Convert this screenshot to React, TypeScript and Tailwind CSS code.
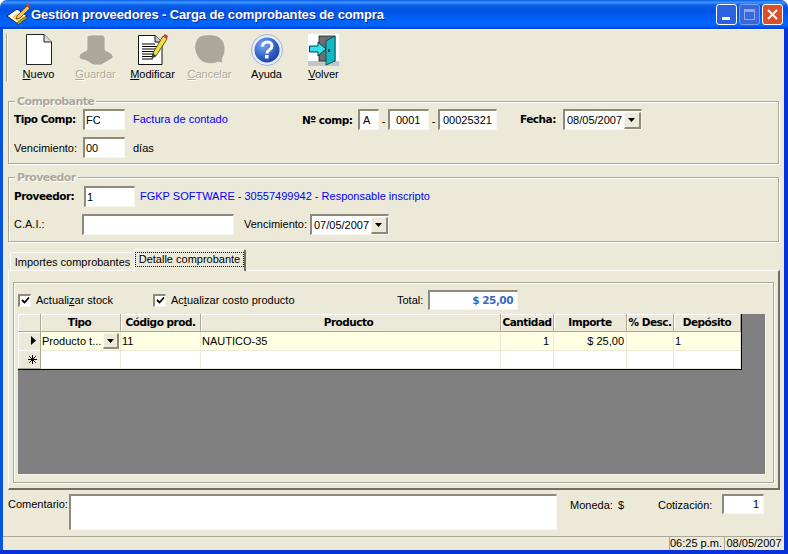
import type { ReactNode } from "react";

const sunken = "bg-white border-t-2 border-l-2 border-t-[#8d8a7c] border-l-[#8d8a7c] border-r border-b border-r-[#f7f6ee] border-b-[#f7f6ee]";
const etched = "border border-[#aca899] shadow-[inset_1px_1px_0_#fff,1px_1px_0_#fff]";
const bold = "font-['DejaVu_Sans'] font-bold text-[10.500px] tracking-[-0.500px]";

function Input({ className, children }: { className: string; children?: ReactNode }) {
  return <div className={`${sunken} h-[21px] flex items-center px-px leading-none shrink-0 ${className}`}>{children}</div>;
}

function ArrowButton({ className }: { className: string }) {
  return (
    <div className={`bg-[#ece9d8] flex items-center justify-center border-t border-l border-t-[#f7f6ee] border-l-[#f7f6ee] border-r-2 border-b-2 border-r-[#8d8a7c] border-b-[#8d8a7c] shrink-0 ${className}`}>
      <svg width="8" height="4" viewBox="0 0 8 4"><path d="M0 0h7L3.500 4z" fill="#000" /></svg>
    </div>
  );
}

function DateCombo({ value }: { value: string }) {
  return (
    <div className={`${sunken} w-[79px] h-[21px] flex items-center shrink-0`}>
      <span className="flex-1 pl-[2px] pt-px whitespace-nowrap">{value}</span>
      <ArrowButton className="w-[17px] h-[17px]" />
    </div>
  );
}

function Group({ title, className, children }: { title: string; className: string; children: ReactNode }) {
  return (
    <div className={`relative ${etched} mx-[5px] ${className}`}>
      <div className="absolute -top-[7px] left-[6px] bg-[#ece9d8] px-[2px] font-['DejaVu_Sans'] font-bold text-[11px] tracking-[-0.600px] leading-[14px] text-[#aca899] [text-shadow:1px_1px_0_#fff]">
        {title}
      </div>
      {children}
    </div>
  );
}

function Check({ className, children }: { className: string; children: ReactNode }) {
  return (
    <div className={`flex items-center gap-[5px] shrink-0 ${className}`}>
      <div className={`${sunken} w-[13px] h-[13px] bg-[#f5f3e8] flex items-center justify-center`}>
        <svg width="9" height="9" viewBox="0 0 9 9"><path d="M1 4l2.500 2.500L8 1.500" fill="none" stroke="#000" strokeWidth="1.800" /></svg>
      </div>
      <span>{children}</span>
    </div>
  );
}

function ToolButton({ icon, label, disabled }: { icon: ReactNode; label: ReactNode; disabled?: boolean }) {
  return (
    <div className="w-[57px] flex flex-col items-center shrink-0">
      <div className="h-[33px] flex items-center justify-center">{icon}</div>
      <div className={`mt-px leading-[14px] ${disabled ? "text-[#aca899] [text-shadow:1px_1px_0_#fff]" : "text-black"}`}>{label}</div>
    </div>
  );
}

function NewIcon() {
  return (
    <svg width="28" height="33" viewBox="0 0 28 33">
      <path d="M1.500 1.500H19L26.500 9v22.500H1.500z" fill="#fff" stroke="#222" />
      <path d="M19 1.500V9h7.500" fill="#ddd" stroke="#222" />
    </svg>
  );
}

function SaveIcon() {
  return (
    <svg width="34" height="32" viewBox="0 0 34 32">
      <path d="M8 2l5-1 11 0 2 2v13l6 3 2 3v2l-5 3-7 4H14l-6-4-7-2-1-3 2-3 6-3z" fill="#aca899" stroke="#fff" strokeWidth="0.600" />
    </svg>
  );
}

function EditIcon() {
  return (
    <svg width="32" height="33" viewBox="0 0 32 33">
      <path d="M1.500 2.500H18L25 9v22.500H1.500z" fill="#fff" stroke="#111" />
      <path d="M18 2.500V9h7" fill="#ccc" stroke="#111" />
      <path d="M5 11h13M5 13.500h15M5 16h15M5 18.500h15M5 21h15M5 23.500h13M5 26h11" stroke="#000" />
      <path d="M26 3l4 3-11 17-4 2 1-5z" fill="#f2e03a" stroke="#333" strokeWidth="0.800" />
      <path d="M26.500 2.500l1.500-1.500 3 2-1 3z" fill="#d83a2a" />
      <path d="M15 25l1-5 3 3z" fill="#333" />
    </svg>
  );
}

function CancelIcon() {
  return (
    <svg width="32" height="32" viewBox="0 0 32 32">
      <path d="M5 3C9 0 21 0 25 3c4 3 6 7 6 12 0 5-2 8-3 10l1 4-5-1c-3 2-11 2-15 0-4-2-7-7-8-12C0 11 2 6 5 3z" fill="#aca899" stroke="#fff" strokeWidth="0.500" />
    </svg>
  );
}

function HelpIcon() {
  return (
    <svg width="32" height="32" viewBox="0 0 32 32">
      <defs>
        <radialGradient id="ayuda" cx="0.350" cy="0.300" r="0.800">
          <stop offset="0" stopColor="#7fa8ee" />
          <stop offset="0.600" stopColor="#2f62c8" />
          <stop offset="1" stopColor="#16389a" />
        </radialGradient>
      </defs>
      <circle cx="16" cy="16" r="15.500" fill="#e8eef9" stroke="#9fb2d8" />
      <circle cx="16" cy="16" r="12.500" fill="url(#ayuda)" />
      <path d="M11.500 12.500c0-6 9.500-6 9.500-.5 0 4-5 3.500-5 7.500" fill="none" stroke="#fff" strokeWidth="3" />
      <rect x="14" y="21" width="3.500" height="3.500" fill="#fff" />
    </svg>
  );
}

function BackIcon() {
  return (
    <svg width="31" height="32" viewBox="0 0 31 32">
      <rect width="31" height="32" fill="#fff" />
      <path d="M0 27h31v5H0z" fill="#c4c4c4" />
      <rect x="11" y="2" width="16" height="25" fill="#6e6e6e" stroke="#222" strokeWidth="0.800" />
      <path d="M18 7l9-5v25l-9 4z" fill="#12b9c4" stroke="#063c44" strokeWidth="0.800" />
      <rect x="20" y="15" width="2" height="3" fill="#063c44" />
      <path d="M1.500 12H10V8l8 7-8 7v-4H1.500z" fill="#35e0ea" stroke="#063c44" />
    </svg>
  );
}

function TitleIcon() {
  return (
    <svg width="24" height="23" viewBox="0 0 24 23">
      <path d="M1 13l10-7 10 7-9 8z" fill="#fff" stroke="#222" />
      <path d="M6 14l6-4 6 4-6 5z" fill="#e8d85a" />
      <path d="M11 20l9-7 1 2-9 7z" fill="#b9a52a" stroke="#222" strokeWidth="0.600" />
      <path d="M11 13L21 3l3 2-10 10-4 1z" fill="#f6c65a" stroke="#6b3b12" strokeWidth="0.800" />
      <path d="M20 2l2-2 2 2-1 3z" fill="#d2452c" />
    </svg>
  );
}

const columns = "grid grid-cols-[23px_80px_80px_300px_53px_73px_47px_67px]";
const head = "bg-[#ece9d8] flex items-center justify-center whitespace-nowrap border-r border-b border-[#aca899] shadow-[inset_1px_1px_0_#fff]";
const cell = "flex items-center px-px pt-px whitespace-nowrap border-r border-b border-[#ece9d8]";

export default function App() {
  return (
    <div className="w-[788px] h-[554px] flex flex-col overflow-hidden bg-[#ece9d8] font-['Liberation_Sans',sans-serif] text-[11px] text-black rounded-t-[7px]">
      {/* Title bar */}
      <div className="h-[29px] shrink-0 flex items-center pl-[6px] pr-[5px] bg-[linear-gradient(180deg,#0a5fe8_0%,#3d95ff_8%,#0a5fe8_18%,#0053e4_35%,#0062f8_70%,#0066ff_88%,#0048d8_96%,#003dd7_100%)]">
        <TitleIcon />
        <span className="ml-[1px] font-bold text-[13px] tracking-[-0.130px] text-white whitespace-nowrap [text-shadow:1px_1px_0_#0f2a90]">
          Gestión proveedores - Carga de comprobantes de compra
        </span>
        <div className="ml-auto flex gap-[2px]">
          <div className="w-[21px] h-[21px] rounded-[3px] border border-white bg-[#2a62e0] flex items-end pl-[5px] pb-[4px]">
            <div className="w-[8px] h-[3px] bg-white" />
          </div>
          <div className="w-[21px] h-[21px] rounded-[3px] border border-[#7b9cee] bg-[#3a68d8] flex items-center justify-center">
            <div className="w-[11px] h-[11px] border border-[#8fa8ec] border-t-[3px]" />
          </div>
          <div className="w-[21px] h-[21px] rounded-[3px] border border-white bg-[#d9512c] flex items-center justify-center">
            <svg width="11" height="11" viewBox="0 0 11 11"><path d="M1 1l9 9M10 1l-9 9" stroke="#fff" strokeWidth="2" /></svg>
          </div>
        </div>
      </div>

      <div className="flex-1 flex min-h-0">
        <div className="w-[3px] bg-[#0855dd] shrink-0" />
        <div className="flex-1 flex flex-col min-w-0">
          {/* Toolbar */}
          <div className="h-[72px] shrink-0 flex border-t border-t-[#f7f6ee] pt-[3px]">
            <div className="ml-[3px] w-[2px] h-[48px] bg-[#aca899] border-r border-white shrink-0" />
            <div className="ml-[2px] flex">
              <ToolButton icon={<NewIcon />} label={<><span className="underline">N</span>uevo</>} />
              <ToolButton disabled icon={<SaveIcon />} label={<><span className="underline">G</span>uardar</>} />
              <ToolButton icon={<EditIcon />} label={<><span className="underline">M</span>odificar</>} />
              <ToolButton disabled icon={<CancelIcon />} label={<><span className="underline">C</span>ancelar</>} />
              <ToolButton icon={<HelpIcon />} label="Ayuda" />
              <ToolButton icon={<BackIcon />} label={<><span className="underline">V</span>olver</>} />
            </div>
          </div>

          {/* Comprobante */}
          <Group title="Comprobante" className="h-[63px] shrink-0 pt-[7px] pl-[5px]">
            <div className="flex items-center">
              <div className={`${bold} w-[69px]`}>Tipo Comp:</div>
              <Input className="w-[42px]">FC</Input>
              <div className="ml-[8px] w-[169px] text-[#0000ff]">Factura de contado</div>
              <div className={`${bold} w-[56px] pt-[2px]`}>Nº comp:</div>
              <Input className="w-[21px] pl-[3px]">A</Input>
              <div className="w-[9px] text-center pt-[3px]">-</div>
              <Input className="w-[41px] pl-[6px]">0001</Input>
              <div className="w-[9px] text-center pt-[3px]">-</div>
              <Input className="w-[59px] pl-[3px]">00025321</Input>
              <div className={`${bold} ml-[23px] w-[43px]`}>Fecha:</div>
              <DateCombo value="08/05/2007" />
            </div>
            <div className="flex items-center mt-[7px]">
              <div className="w-[69px] pt-px">Vencimiento:</div>
              <Input className="w-[42px]">00</Input>
              <div className="ml-[8px] pt-px">días</div>
            </div>
          </Group>

          {/* Proveedor */}
          <Group title="Proveedor" className="h-[65px] shrink-0 mt-[13px] pt-[8px] pl-[5px]">
            <div className="flex items-center">
              <div className={`${bold} w-[70px]`}>Proveedor:</div>
              <Input className="w-[51px]">1</Input>
              <div className="ml-[5px] text-[#0000ff] whitespace-nowrap">FGKP SOFTWARE - 30557499942 - Responsable inscripto</div>
            </div>
            <div className="flex items-center mt-[7px]">
              <div className="w-[68px]">C.A.I.:</div>
              <Input className="w-[152px]" />
              <div className="ml-[10px] w-[66px]">Vencimiento:</div>
              <DateCombo value="07/05/2007" />
            </div>
          </Group>

          {/* Tabs */}
          <div className="h-[21px] shrink-0 mt-[7px] ml-[7px] flex items-end relative z-10">
            <div className="w-[124px] h-[19px] mb-[-1px] flex items-center justify-center border-t border-l border-white rounded-t-[2px]">Importes comprobantes</div>
            <div className="w-[112px] h-[22px] mb-[-1px] flex items-start pt-[3px] justify-center border-t border-l border-white border-r-2 border-r-[#716f64] rounded-t-[2px] bg-[#ece9d8]">
              <span className="outline-1 outline-dotted outline-black px-[3px] leading-[13px]">Detalle comprobante</span>
            </div>
          </div>

          {/* Panel */}
          <div className="h-[220px] shrink-0 ml-[5px] mr-[4px] border-t border-l border-white border-r-2 border-b-2 border-r-[#716f64] border-b-[#716f64] pt-[11px] px-[4px]">
            <div className={`${etched} h-[201px] relative pt-[7px] px-[4px]`}>
              <div className="flex items-center h-[20px]">
                <Check className="w-[135px]">Actuali<span className="underline">z</span>ar stock</Check>
                <Check className="w-[244px]">Ac<span className="underline">t</span>ualizar costo producto</Check>
                <div className="w-[31px]">Total:</div>
                <div className={`${sunken} w-[90px] h-[20px] flex items-center justify-end pr-[4px] ${bold} text-[#316ac5]`}>$ 25,00</div>
              </div>
              <div className="mt-[4px] h-[161px] w-[748px] bg-[#808080] border-r border-b border-[#f7f6ee]">
                <div className="w-[724px] border-r border-b border-black bg-white">
                  <div className={`${columns} h-[18px] ${bold}`}>
                    <div className={head} />
                    <div className={`${head} pt-px pr-[2px]`}>Tipo</div>
                    <div className={`${head} pt-px`}>Código prod.</div>
                    <div className={`${head} pt-px pr-[4px]`}>Producto</div>
                    <div className={`${head} pt-px`}>Cantidad</div>
                    <div className={`${head} pt-px`}>Importe</div>
                    <div className={`${head} pt-px`}>% Desc.</div>
                    <div className={`${head} pt-px`}>Depósito</div>
                  </div>
                  <div className={`${columns} h-[18px] bg-[#ffffe3]`}>
                    <div className={`${head} pl-[9px]`}>
                      <svg width="6" height="9" viewBox="0 0 6 9"><path d="M0 0l5 4.500L0 9z" fill="#000" /></svg>
                    </div>
                    <div className={cell}>
                      <span className="flex-1">Producto t...</span>
                      <ArrowButton className="w-[16px] h-[16px]" />
                    </div>
                    <div className={cell}>11</div>
                    <div className={cell}>NAUTICO-35</div>
                    <div className={`${cell} justify-end pr-[4px]`}>1</div>
                    <div className={`${cell} justify-end pr-[2px]`}>$ 25,00</div>
                    <div className={cell} />
                    <div className={cell}>1</div>
                  </div>
                  <div className={`${columns} h-[19px]`}>
                    <div className={`${head} pl-[6px]`}>
                      <svg width="9" height="9" viewBox="0 0 9 9"><path d="M4.500 0v9M0 4.500h9M1.200 1.200l6.600 6.600M7.800 1.200L1.200 7.800" stroke="#000" /></svg>
                    </div>
                    <div className={cell} />
                    <div className={cell} />
                    <div className={cell} />
                    <div className={cell} />
                    <div className={cell} />
                    <div className={cell} />
                    <div className={cell} />
                  </div>
                </div>
              </div>
            </div>
          </div>

          {/* Comentario */}
          <div className="h-[36px] shrink-0 mt-[4px] flex items-start pl-[5px]">
            <div className="w-[61px] h-[21px] flex items-center">Comentario:</div>
            <div className={`${sunken} w-[488px] h-[36px]`} />
            <div className="ml-[13px] w-[48px] h-[22px] flex items-center">Moneda:</div>
            <div className="w-[40px] h-[22px] flex items-center">$</div>
            <div className="w-[64px] h-[22px] flex items-center">Cotización:</div>
            <div className={`${sunken} w-[42px] h-[20px] flex items-center justify-end pr-[4px]`}>1</div>
          </div>

          {/* Status bar */}
          <div className="h-[14px] shrink-0 mt-[6px] flex border-t border-t-[#aca899] bg-[#ece9d8] mr-[1px] leading-none">
            <div className="flex-1" />
            <div className="w-[53px] flex items-center justify-center border-l border-[#aca899] whitespace-nowrap">06:25 p.m.</div>
            <div className="ml-[2px] w-[59px] flex items-center justify-center border-l border-[#aca899] whitespace-nowrap">08/05/2007</div>
          </div>
        </div>
        <div className="w-[4px] bg-[#0831d9] shrink-0" />
      </div>
      <div className="h-[4px] shrink-0 bg-[#0831d9]" />
    </div>
  );
}
